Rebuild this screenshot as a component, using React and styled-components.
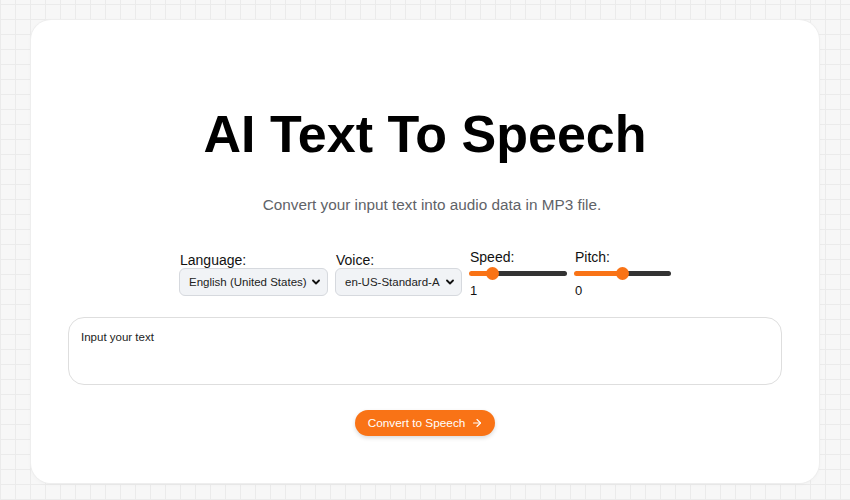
import React, { useState } from "react";
import styled, { createGlobalStyle } from "styled-components";
import { ArrowRight } from "lucide-react";

const GlobalStyle = createGlobalStyle`
  html, body {
    margin: 0;
    padding: 0;
  }
  body {
    font-family: "Liberation Sans", Arial, sans-serif;
    color: #111;
  }
  * {
    box-sizing: border-box;
  }
`;

const Page = styled.div`
  min-height: 100vh;
  padding: 20px 31px 17px;
  background-color: #f7f7f7;
  background-image:
    linear-gradient(to right, #ebebeb 1px, transparent 1px),
    linear-gradient(to bottom, #ebebeb 1px, transparent 1px);
  background-size: 15px 15px;
  background-position: 0 4px;
`;

const Card = styled.main`
  background: #fff;
  border-radius: 20px;
  box-shadow: 0 0 0 1px #eeeeee, 0 1px 4px rgba(0, 0, 0, 0.04);
  padding: 84px 37px 47px;
  display: flex;
  flex-direction: column;
  align-items: center;
`;

const Title = styled.h1`
  margin: 0;
  font-size: 52px;
  line-height: 61px;
  font-weight: 700;
  color: #000;
`;

const Subtitle = styled.p`
  margin: 30px 0 0;
  padding-left: 14px;
  font-size: 15.3px;
  line-height: 20px;
  color: #5f6368;
`;

const Controls = styled.div`
  margin-top: 34px;
  display: flex;
  align-items: center;
  gap: 7px;
`;

const Field = styled.div`
  display: flex;
  flex-direction: column;
  width: ${(p) => p.$width}px;
`;

const Label = styled.label`
  font-size: 14px;
  line-height: 16px;
  color: #111;
  padding-left: 1px;
`;

const Select = styled.select`
  appearance: none;
  -webkit-appearance: none;
  height: 28px;
  width: 100%;
  padding: 0 20px 0 9px;
  font-family: "Liberation Sans", Arial, sans-serif;
  font-size: 11.5px;
  color: #222;
  background-color: #f1f3f6;
  background-image: url("data:image/svg+xml;utf8,<svg xmlns='http://www.w3.org/2000/svg' width='8' height='6' viewBox='0 0 8 6'><path d='M1 1.5l3 3 3-3' fill='none' stroke='%23111' stroke-width='1.8' stroke-linecap='round' stroke-linejoin='round'/></svg>");
  background-repeat: no-repeat;
  background-position: right 7px center;
  border: 1px solid #d6d9de;
  border-radius: 6px;
  outline: none;
`;

const Range = styled.input.attrs({ type: "range" })`
  appearance: none;
  -webkit-appearance: none;
  width: 100%;
  height: 17px;
  margin: 0;
  background: transparent;

  &::-webkit-slider-runnable-track {
    height: 5px;
    border-radius: 3px;
    background: linear-gradient(
      to right,
      #f97316 ${(p) => p.$fill}%,
      #333333 ${(p) => p.$fill}%
    );
  }

  &::-webkit-slider-thumb {
    -webkit-appearance: none;
    width: 13px;
    height: 13px;
    margin-top: -4px;
    border-radius: 50%;
    background: #f97316;
    border: none;
  }
`;

const Value = styled.span`
  font-size: 13px;
  line-height: 17px;
  color: #111;
  padding-left: 1px;
`;

const TextArea = styled.textarea`
  margin-top: 18px;
  width: 100%;
  height: 68px;
  resize: none;
  padding: 13px 12px;
  border: 1px solid #dedede;
  border-radius: 16px;
  font-family: "Liberation Sans", Arial, sans-serif;
  font-size: 11.5px;
  color: #111;
  outline: none;

  &::placeholder {
    color: #222;
  }
`;

const Button = styled.button`
  margin-top: 25px;
  height: 26px;
  padding: 0 12px 0 13px;
  display: flex;
  align-items: center;
  gap: 6px;
  border: none;
  border-radius: 13px;
  background: #f97316;
  color: #fff;
  font-family: "Liberation Sans", Arial, sans-serif;
  font-size: 11.8px;
  box-shadow: 0 2px 4px rgba(0, 0, 0, 0.15);
  cursor: pointer;
`;

function Slider({ label, min, max, step, value, onChange, width }) {
  const ratio = (value - min) / (max - min);
  // thumb is 13px wide, so its centre travels width - 13 along the track
  const fill = ((6.5 + ratio * (width - 13)) / width) * 100;
  return (
    <Field $width={width}>
      <Label>{label}</Label>
      <Range
        min={min}
        max={max}
        step={step}
        value={value}
        $fill={fill}
        onChange={(e) => onChange(Number(e.target.value))}
      />
      <Value>{value}</Value>
    </Field>
  );
}

export default function App() {
  const [speed, setSpeed] = useState(1);
  const [pitch, setPitch] = useState(0);

  return (
    <Page>
      <GlobalStyle />
      <Card>
        <Title>AI Text To Speech</Title>
        <Subtitle>Convert your input text into audio data in MP3 file.</Subtitle>

        <Controls>
          <Field $width={149}>
            <Label>Language:</Label>
            <Select defaultValue="en-US">
              <option value="en-US">English (United States)</option>
              <option value="en-GB">English (United Kingdom)</option>
            </Select>
          </Field>
          <Field $width={127}>
            <Label>Voice:</Label>
            <Select defaultValue="en-US-Standard-A">
              <option value="en-US-Standard-A">en-US-Standard-A</option>
              <option value="en-US-Standard-B">en-US-Standard-B</option>
            </Select>
          </Field>
          <Slider
            label="Speed:"
            min={0.25}
            max={4}
            step={0.25}
            value={speed}
            onChange={setSpeed}
            width={98}
          />
          <Slider
            label="Pitch:"
            min={-20}
            max={20}
            step={1}
            value={pitch}
            onChange={setPitch}
            width={97}
          />
        </Controls>

        <TextArea placeholder="Input your text" />

        <Button>
          Convert to Speech
          <ArrowRight size={12} strokeWidth={2.2} />
        </Button>
      </Card>
    </Page>
  );
}
